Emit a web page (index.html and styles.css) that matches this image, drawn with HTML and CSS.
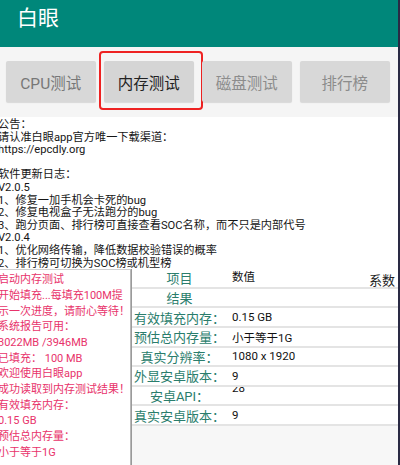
FILE: index.html
```html
<!DOCTYPE html>
<html lang="zh-CN">
<head>
    <meta charset="UTF-8">
    <meta name="viewport" content="width=device-width, initial-scale=1.0">
    <title>白眼</title>
    <link rel="stylesheet" href="styles.css">
</head>
<body>
<div class="page">

    <div class="appbar">白眼</div>

    <div class="tabs">
        <div class="tab">CPU测试</div>
        <div class="tab on">内存测试</div>
        <div class="tab dim">磁盘测试</div>
        <div class="tab dim">排行榜</div>
    </div>

    <div class="notice">
        <div>公告：</div>
        <div>请认准白眼app官方唯一下载渠道：</div>
        <div>https://epcdly.org</div>
        <div>&nbsp;</div>
        <div>软件更新日志：</div>
        <div>V2.0.5</div>
        <div>1、修复一加手机会卡死的bug</div>
        <div>2、修复电视盒子无法跑分的bug</div>
        <div>3、跑分页面、排行榜可直接查看SOC名称，而不只是内部代号</div>
        <div>V2.0.4</div>
        <div>1、优化网络传输，降低数据校验错误的概率</div>
        <div>2、排行榜可切换为SOC榜或机型榜</div>
    </div>

    <div class="split">
        <!-- 测试日志 -->
        <div class="log">
            <div>启动内存测试</div>
            <div>开始填充...每填充100M提<br>示一次进度，请耐心等待！</div>
            <div>系统报告可用：</div>
            <div>3022MB /3946MB</div>
            <div>已填充： 100 MB</div>
            <div>欢迎使用白眼app</div>
            <div>成功读取到内存测试结果！</div>
            <div>有效填充内存：</div>
            <div>0.15 GB</div>
            <div>预估总内存量：</div>
            <div>小于等于1G</div>
        </div>

        <!-- 结果表 -->
        <div class="result">
            <div class="row">
                <div class="key">项目</div>
                <div class="val top">数值</div>
                <div class="coef">系数</div>
            </div>
            <div class="row">
                <div class="key">结果</div>
                <div class="val"></div>
            </div>
            <div class="row">
                <div class="key">有效填充内存：</div>
                <div class="val">0.15 GB</div>
            </div>
            <div class="row">
                <div class="key">预估总内存量：</div>
                <div class="val">小于等于1G</div>
            </div>
            <div class="row">
                <div class="key">真实分辨率：</div>
                <div class="val">1080 x 1920</div>
            </div>
            <div class="row">
                <div class="key">外显安卓版本：</div>
                <div class="val">9</div>
            </div>
            <div class="row">
                <div class="key">安卓API：</div>
                <div class="val up">28</div>
            </div>
            <div class="row">
                <div class="key">真实安卓版本：</div>
                <div class="val">9</div>
            </div>
        </div>
    </div>

</div>
</body>
</html>
```

FILE: styles.css
```css
/* 基本样式 */
body {
    margin: 0;
    font-family: Roboto, "Noto Sans CJK SC", sans-serif;
    background-color: #fff;
    overflow: hidden;
}

.page {
    width: 400px;
    height: 465px;
    box-sizing: border-box;
    border-right: 2px solid #2a2a44;
    overflow: hidden;
}

/* 顶部标题栏 */
.appbar {
    height: 47px;
    background-color: #00877a;
    color: #fff;
    font-size: 21px;
    line-height: 37px;
    padding-left: 17px;
}

/* 测试选项卡 */
.tabs {
    height: 70px;
    background-color: #f5f5f5;
    display: flex;
    align-items: flex-start;
    gap: 8.5px;
    padding: 14px 0 0 6px;
    box-sizing: border-box;
}

.tab {
    position: relative;
    width: 89.5px;
    height: 41px;
    background-color: #d8d8d8;
    border-radius: 2px;
    box-shadow: 0 1px 1px rgba(0, 0, 0, 0.12);
    color: #777;
    font-size: 15.5px;
    display: flex;
    align-items: center;
    justify-content: center;
}

.tab.dim {
    color: #8c8c8c;
}

.tab.on {
    color: #222;
    background-color: #d5d5d5;
}

.tab.on::after {
    content: "";
    position: absolute;
    left: -5px;
    right: -9px;
    top: -10px;
    bottom: -8px;
    border: 2.5px solid #ee2222;
    border-radius: 4px;
}

/* 公告 */
.notice {
    font-size: 11.2px;
    line-height: 12.6px;
    color: #151515;
    margin-left: -2px;
    padding-top: 2px;
    white-space: nowrap;
}

/* 下半部分 */
.split {
    display: flex;
    margin-top: -1px;
    height: 200px;
}

.log {
    width: 130px;
    flex-shrink: 0;
    background-color: #fff;
    border-top: 1px solid #d0d0d0;
    border-right: 1px solid #b8b8b8;
    color: #e8336b;
    font-size: 11px;
    line-height: 15.7px;
    padding-top: 2px;
    overflow: hidden;
    white-space: nowrap;
}

.log div {
    margin-left: -2px;
}

.result {
    flex: 1;
    background-color: #f7f7f7;
    border-left: 1px solid #9a9a9a;
}

.row {
    display: flex;
    align-items: center;
    height: 17.6px;
    border-bottom: 2px solid #e4e4e4;
    background-color: #fff;
    overflow: hidden;
}

.key {
    width: 95px;
    flex-shrink: 0;
    text-align: center;
    color: #2a7d6c;
    font-size: 13px;
    white-space: nowrap;
}

.val {
    flex: 1;
    padding-left: 5px;
    color: #111;
    font-size: 11.5px;
    white-space: nowrap;
}

.val.top {
    align-self: flex-start;
    margin-top: -1px;
}

.val.up {
    margin-top: -14px;
}

.coef {
    color: #222;
    font-size: 13px;
    padding-right: 3px;
    margin-top: 3px;
}
```
